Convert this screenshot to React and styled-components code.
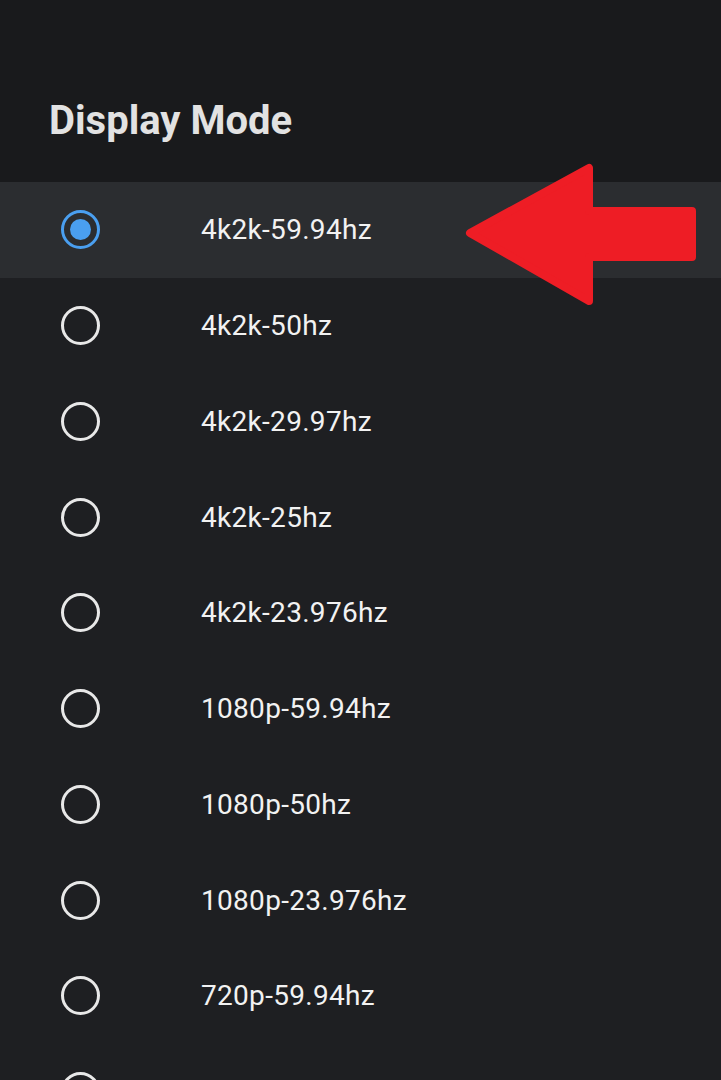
import React from "react";
import styled, { createGlobalStyle } from "styled-components";

const modes = [
    { label: "4k2k-59.94hz", selected: true },
    { label: "4k2k-50hz" },
    { label: "4k2k-29.97hz" },
    { label: "4k2k-25hz" },
    { label: "4k2k-23.976hz" },
    { label: "1080p-59.94hz" },
    { label: "1080p-50hz" },
    { label: "1080p-23.976hz" },
    { label: "720p-59.94hz" },
    // last row is only peeking in at the bottom edge
    { label: "", partial: true },
];

const App = () => {
    return (
        <>
            <GlobalStyle />
            <Screen>
                <Header>
                    <Title>Display Mode</Title>
                </Header>
                <List>
                    {modes.map((m, idx) => (
                        <Row key={idx} selected={m.selected}>
                            <Radio selected={m.selected}>
                                {m.selected && <Dot />}
                            </Radio>
                            {!m.partial && <Label>{m.label}</Label>}
                        </Row>
                    ))}
                </List>
                <Arrow viewBox="460 158 242 152" aria-hidden="true">
                    <path
                        d="M470 233 L589 168 L589 211 L692 211 L692 257 L589 257 L589 301 Z"
                        fill="#ee1d25"
                        stroke="#ee1d25"
                        strokeWidth="8"
                        strokeLinejoin="round"
                    />
                </Arrow>
            </Screen>
        </>
    );
};

// style

const GlobalStyle = createGlobalStyle`
    html, body {
        margin: 0;
        padding: 0;
        background: #1e1f22;
    }
`;

const Screen = styled.div`
    position: relative;
    width: 721px;
    height: 1080px;
    overflow: hidden;
    background-color: #1e1f22;
    font-family: Roboto, "Liberation Sans", sans-serif;
`;

const Header = styled.div`
    height: 182px;
    background-color: #191a1c;
    display: flex;
    align-items: flex-end;
    padding-left: 49px;
    box-sizing: border-box;
    padding-bottom: 41px;
`;

const Title = styled.h1`
    margin: 0;
    font-size: 40px;
    font-weight: 700;
    color: #e2e2e2;
    line-height: 1;
`;

const List = styled.div`
    display: flex;
    flex-direction: column;
`;

const Row = styled.div`
    height: 95.75px;
    flex-shrink: 0;
    display: flex;
    align-items: center;
    padding-left: 61px;
    background-color: ${(p) => (p.selected ? "#2b2d30" : "transparent")};
`;

const Radio = styled.div`
    width: 39px;
    height: 39px;
    box-sizing: border-box;
    border-radius: 50%;
    border: 3px solid ${(p) => (p.selected ? "#4a9ff0" : "#e8e8e8")};
    display: flex;
    align-items: center;
    justify-content: center;
    margin-right: 101px;
`;

const Dot = styled.div`
    width: 21px;
    height: 21px;
    border-radius: 50%;
    background-color: #4a9ff0;
`;

const Label = styled.span`
    font-size: 28px;
    font-weight: 400;
    color: #f2f2f2;
    letter-spacing: 0.3px;
`;

const Arrow = styled.svg`
    position: absolute;
    left: 460px;
    top: 158px;
    width: 242px;
    height: 152px;
`;

export default App;
